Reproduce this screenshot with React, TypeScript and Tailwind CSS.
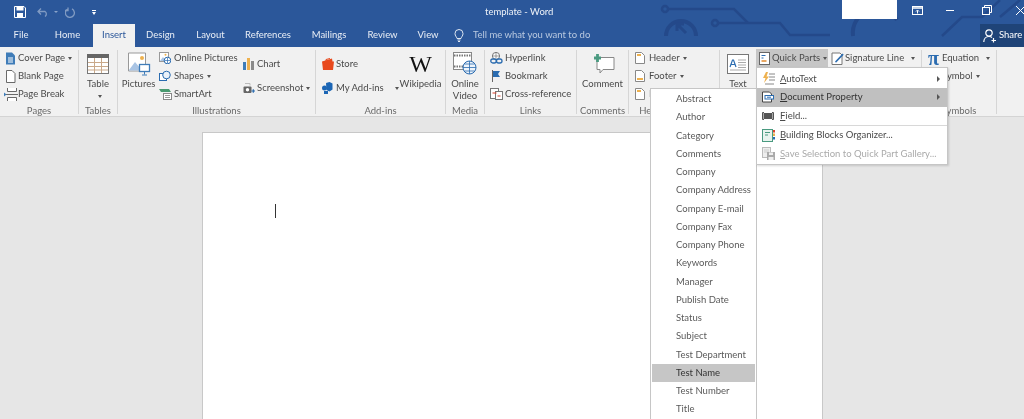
import React from "react";

const G = "#6a6a6a";

const Caret = () => <span className="inline-block ml-[3px] w-0 h-0 border-x-[2.5px] border-x-transparent border-t-[3px] border-t-[#555] align-middle" />;

const Svg = ({ w = 12, h = 12, children }: { w?: number; h?: number; children: React.ReactNode }) => (
  <svg width={w} height={h} viewBox={`0 0 ${w} ${h}`} fill="none" className="shrink-0">{children}</svg>
);

const Sep = () => <div className="w-px h-[64px] mt-px bg-[#d6d6d6] shrink-0" />;

const Group = ({ className, label, children }: { className: string; label: string; children: React.ReactNode }) => (
  <section className={`${className} flex flex-col shrink-0`}>
    <div className="h-[57px] flex">{children}</div>
    <div className="h-[11px] leading-[11px] text-center text-[#6a6a6a] whitespace-nowrap">{label}</div>
  </section>
);

const Row = ({ icon, label, className = "", caret }: { icon?: React.ReactNode; label: React.ReactNode; className?: string; caret?: boolean }) => (
  <div className={`flex items-center h-[18px] whitespace-nowrap ${className}`}>
    {icon}
    <span>{label}</span>
    {caret && <Caret />}
  </div>
);

const Big = ({ className, icon, lines, caret }: { className: string; icon: React.ReactNode; lines: string[]; caret?: boolean }) => (
  <div className={`${className} flex flex-col items-center shrink-0`}>
    <div className="h-[29px] flex items-center justify-center">{icon}</div>
    {lines.map((l) => <div key={l} className="h-[12px] leading-[12px] whitespace-nowrap">{l}</div>)}
    {caret && <div className="h-[12px] flex items-center"><Caret /></div>}
  </div>
);

/* ---------- icons ---------- */
const Box = ({ w, children }: { w: string; children: React.ReactNode }) => <div className={`${w} shrink-0 flex items-center`}>{children}</div>;

const CoverIcon = () => <Svg w={11} h={13}><path d="M1 0.5h6l3 3v9H1z" fill="#3f7cb8" /><path d="M3 6h5M3 8h5M3 10h5" stroke="#fff" /></Svg>;
const BlankIcon = () => <Svg w={11} h={13}><path d="M1.5 .5h5.5l3 3v9h-8.500z" fill="#fff" stroke={G} /></Svg>;
const BreakIcon = () => <Svg w={14} h={13}><path d="M3.500 0v3.500h9V0M3.500 13V9.500h9V13" stroke={G} fill="#fff" /><path d="M2 6.500h12" stroke={G} /><path d="M0 4.500l2.500 2-2.500 2z" fill="#3f7cb8" /></Svg>;
const TableIcon = () => (
  <Svg w={22} h={20}>
    <rect x=".5" y=".5" width="21" height="19" fill="#fff" stroke="#777" />
    <rect x="0" y="0" width="22" height="4" fill="#666" />
    <path d="M7.500 4v15M14.500 4v15M1 8.500h20M1 12.500h20M1 16h20" stroke="#c9a98a" />
  </Svg>
);
const PicturesIcon = () => (
  <Svg w={24} h={24}>
    <path d="M1.500 1h17v14h-4v4h-13z" fill="#fff" stroke="#999" />
    <circle cx="15" cy="6" r="2" fill="#eeb14e" />
    <path d="M2 18l6-8 6 7v1.500H2z" fill="#a9c4e4" />
    <rect x="12.500" y="12.500" width="10" height="7" fill="#fff" stroke="#3f7cb8" strokeWidth="1.300" />
    <path d="M17.500 19.500v3M15 23h5" stroke="#3f7cb8" />
  </Svg>
);
const OnlinePicIcon = () => (
  <Svg w={12} h={12}>
    <rect x=".5" y=".5" width="9" height="9" fill="#fff" stroke="#999" />
    <path d="M1 9l3-4 3 4z" fill="#a9c4e4" /><circle cx="6.500" cy="2.800" r="1" fill="#eeb14e" />
    <circle cx="8.500" cy="8.500" r="3.300" fill="#fff" stroke="#2b6cb0" />
    <path d="M5.500 8.500h6M8.500 5.500v6" stroke="#2b6cb0" strokeWidth=".7" />
  </Svg>
);
const ShapesIcon = () => (
  <Svg w={12} h={12}><rect x=".5" y="3.500" width="7" height="7" fill="#fff" stroke="#2b6cb0" /><circle cx="7.500" cy="5" r="3.800" fill="#eaf2fa" stroke="#2b6cb0" /></Svg>
);
const SmartArtIcon = () => (
  <Svg w={13} h={12}><path d="M0 1h10l2 3H2z" fill="#4a9a70" /><rect x="4.500" y="5.500" width="8" height="6" fill="#fff" stroke="#888" /><path d="M6 7.500h5M6 9.500h5" stroke="#999" /></Svg>
);
const ChartIcon = () => (
  <Svg w={11} h={12}><rect x="0" y="4" width="3" height="8" fill="#3f7cb8" /><rect x="4" y="0" width="3" height="12" fill="#eeb14e" /><rect x="8" y="3" width="3" height="9" fill="#8a8a8a" /></Svg>
);
const ScreenshotIcon = () => (
  <Svg w={12} h={12}><rect x=".5" y="4.500" width="8" height="6.500" fill="#666" rx="1" /><circle cx="4.500" cy="7.800" r="1.700" fill="#fff" /><path d="M8.500 9h3.500M10.300 7.200v3.600" stroke="#2b6cb0" strokeWidth="1.200" /><path d="M2 1.500h5v2" stroke="#bbb" /></Svg>
);
const StoreIcon = () => <Svg w={12} h={12}><path d="M0 3.500l10-3 .5 3h1.500l-1 8.500H1z" fill="#e8491d" /><path d="M4 3l0-1.500 4-1" stroke="#e8491d" /></Svg>;
const AddinsIcon = () => <Svg w={11} h={12}><path d="M4 1l3.500-1 3 1.500v6l-3 2-3-1.500z" fill="#1c66b5" /><circle cx="2.500" cy="6" r="2.500" fill="#1c66b5" /><path d="M2 9h4v3H2z" fill="#1c66b5" /></Svg>;
const VideoIcon = () => (
  <Svg w={24} h={23}>
    <rect x=".5" y=".5" width="18" height="17" fill="#fff" stroke="#888" />
    <path d="M1 3.500h17M1 14.500h17" stroke="#777" strokeDasharray="1.500 1" strokeWidth="2" />
    <circle cx="16.500" cy="15.500" r="6.500" fill="#eef4fb" stroke="#2b6cb0" />
    <path d="M10 15.500h13M16.500 9v13M11.500 12h10M11.500 19h10" stroke="#2b6cb0" strokeWidth=".8" />
  </Svg>
);
const LinkIcon = () => (
  <Svg w={13} h={12}><circle cx="6" cy="4" r="3.600" fill="#fff" stroke="#777" /><path d="M2.500 4h7M6 .5v7" stroke="#777" strokeWidth=".7" /><rect x=".8" y="7" width="5.500" height="4" rx="2" stroke="#2b6cb0" strokeWidth="1.300" /><rect x="6.500" y="7" width="5.500" height="4" rx="2" stroke="#2b6cb0" strokeWidth="1.300" /></Svg>
);
const BookmarkIcon = () => <Svg w={12} h={12}><path d="M2.500 0v12" stroke="#666" /><path d="M3 1h7l-2 3 2 3H3z" fill="#2b6cb0" /></Svg>;
const CrossIcon = () => (
  <Svg w={13} h={12}><rect x=".5" y=".5" width="8" height="10" fill="#fff" stroke="#777" /><rect x="5.500" y="3.500" width="7" height="8" fill="#fff" stroke="#777" /><path d="M2.500 5h4M7.500 8h3" stroke="#d9432e" strokeWidth="1.200" /></Svg>
);
const CommentIcon = () => (
  <Svg w={24} h={20}>
    <path d="M6 3.500h17v12h-11l-3 3.500v-3.500h-3z" fill="#fff" stroke="#888" />
    <path d="M3 4h7M6.500 0v8" stroke="#4a9a80" strokeWidth="2.800" />
  </Svg>
);
const HdrIcon = () => <Svg w={10} h={12}><path d="M.5.500h6l3 3v8h-9z" fill="#fff" stroke="#888" /><rect x="2" y="2" width="4" height="2" fill="#eeb14e" /></Svg>;
const FtrIcon = () => <Svg w={10} h={12}><path d="M.5.500h6l3 3v8h-9z" fill="#fff" stroke="#888" /><rect x="2" y="8" width="6" height="2" fill="#eeb14e" /></Svg>;
const TextIcon = () => (
  <Svg w={22} h={20}>
    <rect x=".5" y=".5" width="21" height="19" fill="#fff" stroke="#777" />
    <path d="M3 13l2.500-7h1l2.500 7M4 10.500h4" stroke="#2b6cb0" strokeWidth="1.200" />
    <path d="M11 6h8M11 8.500h8M11 11h8M11 13.500h8M3 16h16" stroke="#aaa" />
  </Svg>
);
const QuickIcon = () => <Svg w={11} h={13}><rect x=".5" y=".5" width="10" height="12" fill="#fff" stroke="#666" /><path d="M2.500 3.500h4M2.500 6h2" stroke="#2b6cb0" /><path d="M2.500 9h5" stroke="#e08a2e" strokeWidth="1.500" /></Svg>;
const SignIcon = () => <Svg w={13} h={13}><path d="M1 1h8l2 2v9.500H1z" fill="#fff" stroke="#777" /><path d="M4 9.500L11.500 1.500l1.200 1.200L5 10.700z" fill="#2b6cb0" /></Svg>;

/* menu icons */
const AutoTextIcon = () => <Svg w={13} h={13}><path d="M4 0L1 6h2.500L2 11l5-6.500H4.500L6 0z" fill="#eeb14e" /><path d="M7 2h6M7 5h6M7 8h6M3 12h9" stroke="#888" /></Svg>;
const DocPropIcon = () => <Svg w={12} h={12}><path d="M.5 1h7l2 2v8h-9z" fill="#fff" stroke="#444" /><rect x="3" y="4.500" width="8.500" height="3.500" fill="#fff" stroke="#2b6cb0" /><path d="M5 6.200h4" stroke="#2b6cb0" /></Svg>;
const FieldIcon = () => <Svg w={12} h={8}><rect x="1.500" y="1" width="9" height="6" fill="#555" /><path d="M2 .5H.5v7H2M10 .5h1.500v7H10" stroke="#555" /></Svg>;
const BuildIcon = () => <Svg w={13} h={13}><rect x=".5" y=".5" width="10" height="12" fill="#e8f3ee" stroke="#4a9a80" /><path d="M3 3.500h5M3 6h3" stroke="#4a9a80" /><rect x="11" y="1" width="2" height="2.500" fill="#d9432e" /><rect x="11" y="4.500" width="2" height="2.500" fill="#eeb14e" /><rect x="11" y="8" width="2" height="2.500" fill="#2b6cb0" /></Svg>;
const SaveSelIcon = () => <Svg w={13} h={13}><rect x=".5" y=".5" width="8" height="10" fill="#eee" stroke="#bbb" /><path d="M2 3h5M2 5h5" stroke="#ccc" /><rect x="5" y="5" width="8" height="8" fill="#aaa" /><rect x="7" y="5.500" width="4" height="2.500" fill="#eee" /><rect x="6.500" y="10" width="5" height="3" fill="#eee" /></Svg>;

const U = ({ children }: { children: string }) => <span className="underline underline-offset-1">{children}</span>;

const MenuItem = ({ icon, label, arrow, className = "" }: { icon: React.ReactNode; label: React.ReactNode; arrow?: boolean; className?: string }) => (
  <div className={`h-[18.500px] flex items-center whitespace-nowrap ${className}`}>
    <div className="w-[23px] pl-[3px] shrink-0 flex justify-center pr-[4px]">{icon}</div>
    <span className="flex-1">{label}</span>
    {arrow && <span className="mr-[7px] w-0 h-0 border-y-[3px] border-y-transparent border-l-[3.500px] border-l-[#555]" />}
  </div>
);

const props = ["Abstract", "Author", "Category", "Comments", "Company", "Company Address", "Company E-mail", "Company Fax", "Company Phone", "Keywords", "Manager", "Publish Date", "Status", "Subject", "Test Department", "Test Name", "Test Number", "Title"];
const tabs: [string, string][] = [
  ["File", "w-[42px]"], ["Home", "w-[51px]"], ["Insert", "w-[42px]"], ["Design", "w-[51px]"], ["Layout", "w-[49px]"],
  ["References", "w-[66px]"], ["Mailings", "w-[56px]"], ["Review", "w-[51px]"], ["View", "w-[40px]"],
];

export default function App() {
  return (
    <div className="relative w-[1024px] h-[419px] overflow-hidden flex flex-col bg-[#e6e6e6] text-[9.5px] text-[#4a4a4a] blur-[0.4px] font-['Lato','Open_Sans',sans-serif]">
      {/* title + tabs */}
      <header className="relative h-[47px] bg-[#2b579a] shrink-0 text-[#e9eef6]">
        <svg width="1024" height="47" className="absolute inset-0" fill="none" stroke="#24498a" strokeWidth="2.500">
          <circle cx="665" cy="9" r="3" /><path d="M668 9h66l14 14" />
          <circle cx="715" cy="23" r="3" /><path d="M718 23h62l10 12h40" />
          <path d="M666 36a15 15 0 1 1 30 0" strokeWidth="4" /><path d="M686 33l-9-9M677 31v-7h7" strokeWidth="3" />
          <path d="M853 36a24 24 0 0 1 44-16" strokeWidth="4" />
          <path d="M942 36l20-19h20l18-17M1000 17l20-17" />
        </svg>
        <div className="relative h-[24px] flex items-center">
          <div className="w-[485px] shrink-0 flex items-center">
            <div className="w-[32px] flex justify-center ml-[4px]">
              <svg width="12" height="12" viewBox="0 0 12 12" fill="none"><path d="M.5.500h9.500l1.500 1.500v9.500H.5z" stroke="#fff" /><rect x="2.500" y="1" width="7" height="3.500" fill="#fff" /><rect x="3" y="7" width="6" height="4" fill="#fff" /></svg>
            </div>
            <svg width="12" height="10" viewBox="0 0 12 10" fill="none" className="ml-px opacity-40"><path d="M1 4.500h7a3 3 0 0 1 0 5M4 1.500l-3 3 3 3" stroke="#fff" strokeWidth="1.300" /></svg>
            <span className="ml-[5px] w-0 h-0 border-x-[2px] border-x-transparent border-t-[2.500px] border-t-[#8aa3c9]" />
            <svg width="11" height="11" viewBox="0 0 11 11" fill="none" className="ml-[7px] opacity-40"><path d="M3 1.800a4.500 4.500 0 1 0 4 .1M3 .5v3H0" stroke="#fff" strokeWidth="1.300" /></svg>
            <span className="ml-[16px] flex flex-col items-center gap-[1px]">
              <span className="w-[4px] h-px bg-white" />
              <span className="w-0 h-0 border-x-[2.500px] border-x-transparent border-t-[3px] border-t-white" />
            </span>
          </div>
          <div className="w-[357px] shrink-0 whitespace-nowrap text-[#eef2f8]">template - Word</div>
          <div className="w-[55px] h-[19px] shrink-0 self-start bg-white" />
          <svg width="11" height="9" viewBox="0 0 11 9" fill="none" className="ml-[15px] mb-[4px] shrink-0"><rect x=".5" y=".5" width="10" height="8" stroke="#fff" /><path d="M1 2h9" stroke="#fff" strokeWidth="1.500" /><path d="M5.500 7.500v-3M4 5.500l1.500-1.500 1.500 1.500" stroke="#fff" /></svg>
          <span className="ml-[23px] mb-[4px] w-[8px] h-px bg-white shrink-0" />
          <svg width="10" height="10" viewBox="0 0 10 10" fill="none" className="ml-[28px] mb-[4px] shrink-0"><rect x=".5" y="2.500" width="7" height="7" stroke="#fff" /><path d="M2.500 2.500v-2h7v7h-2" stroke="#fff" /></svg>
          <svg width="9" height="9" viewBox="0 0 9 9" fill="none" className="ml-[24px] mb-[4px] shrink-0"><path d="M0 0l9 9M9 0L0 9" stroke="#fff" /></svg>
        </div>
        <nav className="relative h-[23px] flex items-stretch">
          {tabs.map(([t, w]) => (
            <div key={t} className={`${w} shrink-0 flex items-center justify-center ${t === "Insert" ? "bg-[#f1f1f1] text-[#2b579a]" : ""}`}>{t}</div>
          ))}
          <div className="ml-[6px] flex items-center text-[#b9c9e0]">
            <svg width="10" height="13" viewBox="0 0 10 13" fill="none" className="mr-[9px]"><path d="M3 9.500C2.500 7.500 1 7 1 4.500a4 4 0 0 1 8 0c0 2.500-1.500 3-2 5zM3.500 11h3M4 12.500h2" stroke="#dfe7f2" /></svg>
            <span>Tell me what you want to do</span>
          </div>
          <div className="ml-auto w-[44px] bg-[#1f4478] flex items-center pl-[3px] text-white">
            <svg width="14" height="14" viewBox="0 0 14 14" fill="none" className="mr-[2px]"><circle cx="6" cy="4" r="3.200" stroke="#fff" strokeWidth="1.200" /><path d="M.8 13c0-3 2-5.500 5.200-5.500 1.200 0 2.200.3 3 1M10.500 9v4.500M8.500 11.500h4.500" stroke="#fff" strokeWidth="1.200" /></svg>
            <span>Share</span>
          </div>
        </nav>
      </header>

      {/* ribbon */}
      <div className="h-[70px] shrink-0 bg-[#f1f1f1] border-b border-[#d4d4d4] pt-[2px] flex">
        <Group className="w-[78px]" label="Pages">
          <div className="pl-[5px]">
            <Row icon={<Box w="w-[13px]"><CoverIcon /></Box>} label="Cover Page" caret />
            <Row icon={<Box w="w-[13px]"><BlankIcon /></Box>} label="Blank Page" />
            <Row icon={<Box w="w-[14px] -ml-[1px]"><BreakIcon /></Box>} label="Page Break" />
          </div>
        </Group>
        <Sep />
        <Group className="w-[38px]" label="Tables">
          <Big className="w-[38px]" icon={<TableIcon />} lines={["Table"]} caret />
        </Group>
        <Sep />
        <Group className="w-[197px]" label="Illustrations">
          <Big className="w-[41px]" icon={<PicturesIcon />} lines={["Pictures"]} />
          <div className="w-[84px] shrink-0">
            <Row icon={<Box w="w-[15px]"><OnlinePicIcon /></Box>} label="Online Pictures" />
            <Row icon={<Box w="w-[15px]"><ShapesIcon /></Box>} label="Shapes" caret />
            <Row icon={<Box w="w-[15px]"><SmartArtIcon /></Box>} label="SmartArt" />
          </div>
          <div className="pt-[6px] flex flex-col gap-[6px]">
            <Row icon={<Box w="w-[14px]"><ChartIcon /></Box>} label="Chart" />
            <Row icon={<Box w="w-[14px]"><ScreenshotIcon /></Box>} label="Screenshot" caret />
          </div>
        </Group>
        <Sep />
        <Group className="w-[129px]" label="Add-ins">
          <div className="w-[84px] shrink-0 pl-[6px] pt-[6px] flex flex-col gap-[6px]">
            <Row icon={<Box w="w-[14px]"><StoreIcon /></Box>} label="Store" />
            <Row icon={<Box w="w-[14px]"><AddinsIcon /></Box>} label={<>My Add-ins<span className="ml-[8px] inline-block"><Caret /></span></>} />
          </div>
          <Big className="w-[41px]" icon={<span className="font-['Liberation_Serif',serif] text-[24px] leading-none text-[#111]">W</span>} lines={["Wikipedia"]} />
        </Group>
        <Sep />
        <Group className="w-[38px]" label="Media">
          <Big className="w-[38px]" icon={<VideoIcon />} lines={["Online", "Video"]} />
        </Group>
        <Sep />
        <Group className="w-[91px]" label="Links">
          <div className="pl-[5px]">
            <Row icon={<Box w="w-[15px]"><LinkIcon /></Box>} label="Hyperlink" />
            <Row icon={<Box w="w-[15px]"><BookmarkIcon /></Box>} label="Bookmark" />
            <Row icon={<Box w="w-[15px]"><CrossIcon /></Box>} label="Cross-reference" />
          </div>
        </Group>
        <Sep />
        <Group className="w-[51px]" label="Comments">
          <Big className="w-[51px]" icon={<CommentIcon />} lines={["Comment"]} />
        </Group>
        <Sep />
        <Group className="w-[90px]" label="Header & Footer">
          <div className="pl-[6px]">
            <Row icon={<Box w="w-[14px]"><HdrIcon /></Box>} label="Header" caret />
            <Row icon={<Box w="w-[14px]"><FtrIcon /></Box>} label="Footer" caret />
            <Row icon={<Box w="w-[14px]"><HdrIcon /></Box>} label="Page Number" caret />
          </div>
        </Group>
        <Sep />
        <Group className="w-[201px]" label="Text">
          <Big className="w-[36px]" icon={<TextIcon />} lines={["Text"]} />
          <div className="flex items-start">
            <div className="w-[72px] h-[18px] bg-[#c6c6c6] flex items-center pl-[3px] whitespace-nowrap">
              <span className="w-[13px] shrink-0"><QuickIcon /></span>Quick Parts<Caret />
            </div>
            <div className="ml-[3px] h-[18px] flex items-center whitespace-nowrap">
              <span className="w-[14px] shrink-0"><SignIcon /></span>Signature Line<span className="ml-[4px]"><Caret /></span>
            </div>
          </div>
        </Group>
        <Sep />
        <Group className="w-[74px]" label="Symbols">
          <div className="pl-[6px]">
            <Row icon={<span className="w-[14px] shrink-0 font-['Liberation_Serif',serif] font-bold text-[20px] leading-none text-[#2b6cb0]">π</span>} label={<>Equation<span className="ml-[4px]"><Caret /></span></>} />
            <Row icon={<span className="w-[14px] shrink-0" />} label="Symbol" caret />
          </div>
        </Group>
        <Sep />
      </div>

      {/* document canvas */}
      <main className="flex-1 pt-[15px] pl-[202px]">
        <div className="w-[621px] h-full bg-white border-x border-t border-[#c8c8c8] pt-[71px] pl-[72px]">
          <div className="w-px h-[14px] bg-[#333]" />
        </div>
      </main>

      {/* submenu */}
      <div className="absolute left-[650px] top-[88px] w-[107px] h-[340px] bg-white border border-[#c6c6c6] pl-px pr-px pt-[1px]">
        {props.map((p) => (
          <div key={p} className={`h-[18.250px] pl-[24px] flex items-center whitespace-nowrap ${p === "Test Name" ? "bg-[#c6c6c6] text-[#333]" : "text-[#5a5a5a]"}`}>{p}</div>
        ))}
      </div>

      {/* quick parts menu */}
      <div className="absolute left-[756px] top-[67px] w-[192px] bg-white border border-[#c6c6c6] pt-[1.500px] pb-[1px] shadow-[1px_1px_2px_rgba(0,0,0,0.15)]">
        <MenuItem icon={<AutoTextIcon />} label={<><U>A</U>utoText</>} arrow />
        <MenuItem className="bg-[#c0c0c0] text-[#333]" icon={<DocPropIcon />} label={<><U>D</U>ocument Property</>} arrow />
        <MenuItem icon={<FieldIcon />} label={<><U>F</U>ield...</>} />
        <div className="ml-[23px] h-px bg-[#d8d8d8]" />
        <MenuItem icon={<BuildIcon />} label={<><U>B</U>uilding Blocks Organizer...</>} />
        <MenuItem className="text-[#aaa]" icon={<SaveSelIcon />} label={<><U>S</U>ave Selection to Quick Part Gallery...</>} />
      </div>
    </div>
  );
}
